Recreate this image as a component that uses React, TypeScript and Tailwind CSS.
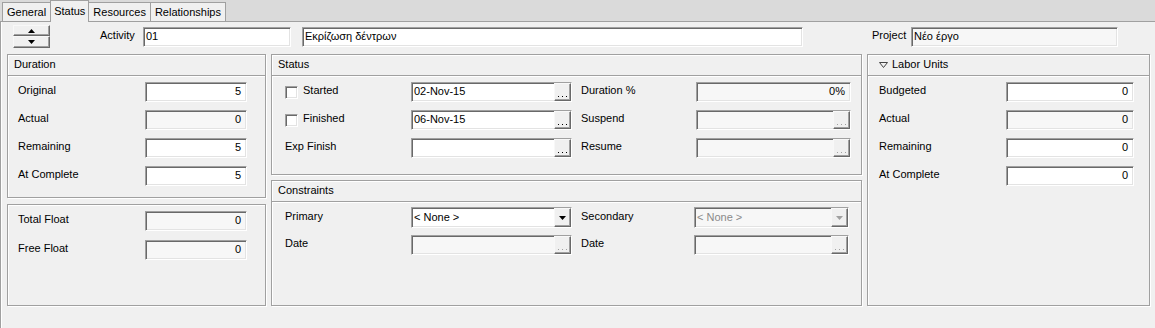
import React from "react";

const sunken =
  "border border-[#a0a0a0] border-r-white border-b-white shadow-[inset_1px_1px_0_#696969,inset_-1px_-1px_0_#e3e3e3]";
const raised =
  "bg-[#f0f0f0] border border-[#f8f8f8] border-r-[#696969] border-b-[#696969] shadow-[inset_-1px_-1px_0_#a0a0a0]";
const panel =
  "border border-[#a0a0a0] shadow-[inset_1px_1px_0_#fff,1px_1px_0_#fff]";

function Field({
  value = "",
  width,
  disabled,
  align = "right",
  button,
  height = "h-[20px]",
}: {
  value?: string;
  width: string;
  disabled?: boolean;
  align?: "left" | "right";
  button?: "dots" | "dots-off" | "drop" | "drop-off";
  height?: string;
}) {
  return (
    <div
      className={`flex items-center ${height} ${width} ${sunken} ${
        disabled ? "bg-[#f7f7f7]" : "bg-white"
      }`}
    >
      <span
        className={`-mt-px flex-1 truncate px-[2px] ${
          align === "right" ? "text-right pr-[5px]" : "text-left"
        } ${button === "drop-off" ? "text-[#8a8a8a]" : ""}`}
      >
        {value}
      </span>
      {button && (
        <div
          className={`flex h-full w-[17px] items-end justify-center ${raised}`}
        >
          {(button === "dots" || button === "dots-off") && (
            <svg width="9" height="1" viewBox="0 0 9 1" className="mb-[3px]">
              <path
                d="M0 0h1v1H0zM4 0h1v1H4zM8 0h1v1H8z"
                fill={button === "dots" ? "#000" : "#a0a0a0"}
              />
            </svg>
          )}
          {(button === "drop" || button === "drop-off") && (
            <svg width="7" height="4" className="mb-[6px]" viewBox="0 0 7 4">
              <path
                d="M0 0h7L3.5 4z"
                fill={button === "drop" ? "#000" : "#a0a0a0"}
              />
            </svg>
          )}
        </div>
      )}
    </div>
  );
}

function Row({
  label,
  labelW,
  children,
  h = "h-[20px]",
}: {
  label: React.ReactNode;
  labelW: string;
  children: React.ReactNode;
  h?: string;
}) {
  return (
    <div className={`flex items-center ${h}`}>
      <div className={`${labelW} -mt-[3px] flex items-center`}>{label}</div>
      {children}
    </div>
  );
}

function Check({ label }: { label: string }) {
  return (
    <span className="flex items-center">
      <span className={`mt-[3px] h-[13px] w-[13px] bg-white ${sunken}`} />
      <span className="ml-[5px]">{label}</span>
    </span>
  );
}

function Header({ children }: { children: React.ReactNode }) {
  return (
    <div className="flex h-[21px] items-center border-b border-[#a0a0a0] pl-[6px] pb-px shadow-[0_1px_0_#fff]">
      {children}
    </div>
  );
}

export default function App() {
  const tabs = ["General", "Status", "Resources", "Relationships"];
  return (
    <div className="h-[328px] w-[1155px] overflow-hidden bg-[#f0f0f0] font-['Liberation_Sans',Arial,sans-serif] text-[11px] text-black">
      {/* tab strip */}
      <div className="flex h-[22px] items-end border-b border-[#a0a0a0] bg-[#dadada] pl-[2px]">
        {tabs.map((t) =>
          t === "Status" ? (
            <div
              key={t}
              className="relative z-10 -mb-[1px] -ml-px flex h-[22px] items-center border border-b-0 border-[#a0a0a0] bg-[#f0f0f0] px-[3px] pb-[1px]"
            >
              {t}
            </div>
          ) : (
            <div
              key={t}
              className="flex h-[19px] items-center border border-b-0 border-[#a0a0a0] bg-[#f0f0f0] px-[4px] -ml-px first:ml-0"
            >
              {t}
            </div>
          )
        )}
      </div>

      {/* page */}
      <div className="h-[306px] border-l border-[#a0a0a0] shadow-[inset_1px_0_0_#fff]">
        {/* top row */}
        <div className="flex h-[32px] items-start">
          <div className="ml-[12px] mt-[3px] flex h-[23px] w-[37px] flex-col">
            <div className={`flex h-[11px] items-center justify-center ${raised}`}>
              <svg width="7" height="4" viewBox="0 0 7 4">
                <path d="M3.5 0L7 4H0z" fill="#000" />
              </svg>
            </div>
            <div className={`flex h-[12px] items-center justify-center ${raised}`}>
              <svg width="7" height="4" viewBox="0 0 7 4">
                <path d="M0 0h7L3.5 4z" fill="#000" />
              </svg>
            </div>
          </div>
          <div className="mt-[5px] flex h-[20px] items-center">
            <span className="ml-[50px] w-[43px] -mt-[3px]">Activity</span>
            <Field value="01" width="w-[148px]" align="left" />
            <div className="ml-[11px]">
              <Field value="Εκρίζωση δέντρων" width="w-[501px]" align="left" />
            </div>
            <span className="ml-[69px] w-[39px] -mt-[3px]">Project</span>
            <Field value="Νέο έργο" width="w-[207px]" align="left" disabled />
          </div>
        </div>

        {/* panels */}
        <div className="ml-[6px] flex gap-[5px]">
          {/* left column */}
          <div className="flex w-[259px] flex-col gap-[6px]">
            <div className={`h-[144px] ${panel}`}>
              <Header>Duration</Header>
              <div className="flex flex-col gap-[8px] pl-[10px] pt-[6px]">
                <Row label="Original" labelW="w-[127px]">
                  <Field value="5" width="w-[102px]" />
                </Row>
                <Row label="Actual" labelW="w-[127px]">
                  <Field value="0" width="w-[102px]" disabled />
                </Row>
                <Row label="Remaining" labelW="w-[127px]">
                  <Field value="5" width="w-[102px]" />
                </Row>
                <Row label="At Complete" labelW="w-[127px]">
                  <Field value="5" width="w-[102px]" />
                </Row>
              </div>
            </div>
            <div className={`h-[102px] ${panel}`}>
              <div className="flex flex-col gap-[9px] pl-[10px] pt-[6px]">
                <Row label="Total Float" labelW="w-[127px]">
                  <Field value="0" width="w-[102px]" disabled />
                </Row>
                <Row label="Free Float" labelW="w-[127px]">
                  <Field value="0" width="w-[102px]" disabled />
                </Row>
              </div>
            </div>
          </div>

          {/* middle column */}
          <div className="flex w-[591px] flex-col gap-[5px]">
            <div className={`h-[121px] ${panel}`}>
              <Header>Status</Header>
              <div className="flex flex-col gap-[8px] pl-[13px] pt-[6px]">
                <Row label={<Check label="Started" />} labelW="w-[126px]">
                  <Field value="02-Nov-15" width="w-[161px]" align="left" button="dots" />
                  <span className="ml-[9px] w-[115px] -mt-[3px]">Duration %</span>
                  <Field value="0%" width="w-[155px]" disabled />
                </Row>
                <Row label={<Check label="Finished" />} labelW="w-[126px]">
                  <Field value="06-Nov-15" width="w-[161px]" align="left" button="dots" />
                  <span className="ml-[9px] w-[115px] -mt-[3px]">Suspend</span>
                  <Field width="w-[155px]" disabled button="dots-off" />
                </Row>
                <Row label="Exp Finish" labelW="w-[126px]">
                  <Field width="w-[161px]" align="left" button="dots" />
                  <span className="ml-[9px] w-[115px] -mt-[3px]">Resume</span>
                  <Field width="w-[155px]" disabled button="dots-off" />
                </Row>
              </div>
            </div>
            <div className={`h-[126px] ${panel}`}>
              <Header>Constraints</Header>
              <div className="flex flex-col gap-[7px] pl-[13px] pt-[5px]">
                <Row label="Primary" labelW="w-[126px]" h="h-[21px]">
                  <Field value="< None >" width="w-[161px]" align="left" button="drop" height="h-[21px]" />
                  <span className="ml-[9px] w-[113px] -mt-[3px]">Secondary</span>
                  <Field
                    value="< None >"
                    width="w-[155px]"
                    align="left"
                    disabled
                    button="drop-off"
                    height="h-[21px]"
                  />
                </Row>
                <Row label="Date" labelW="w-[126px]">
                  <Field width="w-[161px]" disabled button="dots-off" />
                  <span className="ml-[9px] w-[113px] -mt-[3px]">Date</span>
                  <Field width="w-[155px]" disabled button="dots-off" />
                </Row>
              </div>
            </div>
          </div>

          {/* right column */}
          <div className={`h-[252px] w-[283px] ${panel}`}>
            <Header>
              <span className="ml-[5px] flex items-center">
                <svg width="9" height="6" viewBox="0 0 9 6" className="mr-[4px] mt-px">
                  <path d="M0.5 0.5H8.5L4.5 5.5Z" fill="none" stroke="#444" strokeWidth="1" />
                </svg>
                Labor Units
              </span>
            </Header>
            <div className="flex flex-col gap-[8px] pl-[11px] pt-[6px]">
              <Row label="Budgeted" labelW="w-[127px]">
                <Field value="0" width="w-[128px]" />
              </Row>
              <Row label="Actual" labelW="w-[127px]">
                <Field value="0" width="w-[128px]" disabled />
              </Row>
              <Row label="Remaining" labelW="w-[127px]">
                <Field value="0" width="w-[128px]" />
              </Row>
              <Row label="At Complete" labelW="w-[127px]">
                <Field value="0" width="w-[128px]" />
              </Row>
            </div>
          </div>
        </div>
      </div>
    </div>
  );
}
